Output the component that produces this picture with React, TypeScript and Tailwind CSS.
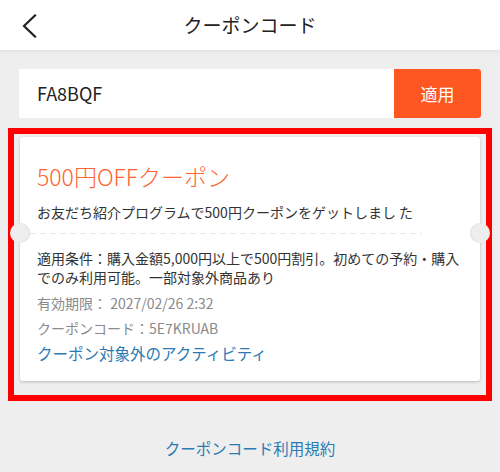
const font = { fontFamily: '"Noto Sans CJK JP", "Noto Sans", sans-serif' };

function CouponCard() {
  return (
    <div className="relative w-[460px] rounded-[3px] bg-white pt-[23px] pb-[17px] shadow-[0_1px_3px_rgba(0,0,0,0.22)]">
      <div className="absolute left-[-10px] top-[86px] h-[20px] w-[20px] rounded-full bg-[#eeeeee] shadow-[inset_-1px_0_1px_rgba(0,0,0,0.08)]" />
      <div className="absolute right-[-10px] top-[86px] h-[20px] w-[20px] rounded-full bg-[#eeeeee] shadow-[inset_1px_0_1px_rgba(0,0,0,0.08)]" />
      <div className="px-[17px]">
        <p className="text-[23px] font-light leading-[32px] text-[#ff6331]">500円OFFクーポン</p>
        <p className="mt-[10px] text-[14px] leading-[20px] text-[#333333]">
          お友だち紹介プログラムで500円クーポンをゲットしまし た
        </p>
      </div>
      <div className="ml-[10px] mt-[11px] h-px w-[392px] bg-[repeating-linear-gradient(90deg,#e6e6e6_0_6px,transparent_6px_10px)]" />
      <div className="px-[17px]">
        <p className="mt-[15px] text-[14px] leading-[19px] text-[#333333]">
          適用条件：購入金額5,000円以上で500円割引。初めての予約・購入でのみ利用可能。一部対象外商品あり
        </p>
        <p className="mt-[6px] text-[14px] leading-[20px] text-[#8a8a8a]">有効期限： 2027/02/26 2:32</p>
        <p className="mt-[5px] text-[14px] leading-[20px] text-[#8a8a8a]">クーポンコード：5E7KRUAB</p>
        <p className="mt-[4px] text-[15.5px] leading-[22px] text-[#2a7bb5]">クーポン対象外のアクティビティ</p>
      </div>
    </div>
  );
}

export default function App() {
  return (
    <div className="h-[472px] w-[500px] overflow-hidden bg-[#eeeeee]" style={font}>
      <div className="relative flex h-[50px] items-center justify-center bg-white shadow-[0_1px_4px_rgba(0,0,0,0.08)]">
        <svg className="absolute left-[21px] top-[14px]" width="17" height="24" viewBox="0 0 17 24" fill="none">
          <polyline points="14,1.5 3,12 14,22.5" stroke="#222222" strokeWidth="2.2" strokeLinecap="square" />
        </svg>
        <h1 className="text-[19px] text-[#222222]">クーポンコード</h1>
      </div>

      <div className="px-2 pt-[19px]">
        <div className="mx-[11px] flex h-[49px] overflow-hidden rounded-[3px] bg-white">
          <div className="flex flex-1 items-center pl-[18px] text-[18px] text-[#222222]">FA8BQF</div>
          <button className="w-[87px] bg-[#ff5722] text-[17px] text-white">適用</button>
        </div>

        <div className="mt-[10px] border-[6px] border-[#ff0000] px-[6px] pt-[3px] pb-[14px]">
          <CouponCard />
        </div>

        <p className="mt-[36px] text-center text-[15.5px] text-[#2a7bb5]">クーポンコード利用規約</p>
      </div>
    </div>
  );
}
